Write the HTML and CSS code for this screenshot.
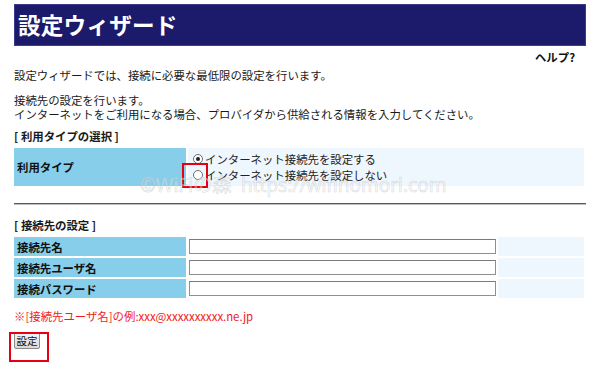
FILE: index.html
```html
<!DOCTYPE html>
<html lang="ja">
<head>
<meta charset="utf-8">
<link rel="stylesheet" href="styles.css">
</head>
<body>
<div class="page">
  <div class="header"><h1 class="title">設定ウィザード</h1></div>
  <div class="help">ヘルプ?</div>
  <p class="intro">設定ウィザードでは、接続に必要な最低限の設定を行います。</p>
  <p class="desc">接続先の設定を行います。<br>インターネットをご利用になる場合、プロバイダから供給される情報を入力してください。</p>

  <div class="section-title">[ 利用タイプの選択 ]</div>
  <div class="type-grid">
    <div class="label-cell">利用タイプ</div>
    <div class="value-cell radios">
      <label class="radio-row"><span class="radio checked"></span>インターネット接続先を設定する</label>
      <label class="radio-row"><span class="radio"></span>インターネット接続先を設定しない</label>
    </div>
  </div>

  <div class="rule"></div>

  <div class="section-title second">[ 接続先の設定 ]</div>
  <div class="conn-grid">
    <div class="label-cell">接続先名</div>
    <div class="input-cell"><span class="field"></span></div>
    <div class="value-cell"></div>
    <div class="label-cell">接続先ユーザ名</div>
    <div class="input-cell"><span class="field"></span></div>
    <div class="value-cell"></div>
    <div class="label-cell">接続パスワード</div>
    <div class="input-cell"><span class="field"></span></div>
    <div class="value-cell"></div>
  </div>

  <p class="note">※[接続先ユーザ名]の例:xxx@xxxxxxxxxx.ne.jp</p>
  <div class="btn-wrap"><button class="btn">設定</button></div>

  <div class="mark mark-radio"></div>
  <div class="mark mark-btn"></div>
  <div class="watermark">©WiFiの森 &nbsp;https://wifinomori.com</div>
</div>
</body>
</html>
```

FILE: styles.css
```css
html, body {
  margin: 0;
  padding: 0;
  background: #ffffff;
}
body {
  font-family: "Noto Sans CJK JP", "Noto Sans", sans-serif;
  font-size: 11.4px;
  color: #1a1a1a;
}
.page {
  position: relative;
  width: 600px;
  height: 365px;
  padding: 4px 14px 0;
  box-sizing: border-box;
  overflow: hidden;
}
.header {
  height: 42px;
  background: #1b1a6b;
  border: 1px solid #3e3d8c;
  box-sizing: border-box;
  width: 572px;
  display: flex;
  align-items: center;
}
.title {
  margin: 0 0 0 3px;
  color: #ffffff;
  font-size: 22.6px;
  font-weight: 700;
  line-height: 28px;
  letter-spacing: 0.2px;
}
.help {
  margin-top: 5px;
  width: 561px;
  text-align: right;
  font-weight: 700;
  line-height: 13px;
  color: #111;
}
.intro {
  margin: 5px 0 0;
  line-height: 13px;
}
.desc {
  margin: 11px 0 0;
  line-height: 14px;
}
.section-title {
  margin-top: 9px;
  font-weight: 700;
  line-height: 13px;
}
.section-title.second {
  margin-top: 14px;
}
.type-grid {
  margin-top: 5px;
  display: grid;
  grid-template-columns: 172px 396px;
  column-gap: 2px;
  height: 38px;
}
.label-cell {
  background: #87ceeb;
  font-weight: 700;
  display: flex;
  align-items: center;
  padding-left: 3px;
  color: #111;
}
.value-cell {
  background: #eef6fe;
}
.radios {
  display: flex;
  flex-direction: column;
  justify-content: center;
  padding-left: 5px;
}
.radio-row {
  display: flex;
  align-items: center;
  line-height: 16px;
  height: 16px;
  color: #222;
}
.radio {
  width: 8px;
  height: 8px;
  border: 1px solid #6e6e6e;
  border-radius: 50%;
  background: #fff;
  margin-right: 2px;
  position: relative;
  flex: none;
}
.radio.checked::after {
  content: "";
  position: absolute;
  left: 2px;
  top: 2px;
  width: 4px;
  height: 4px;
  border-radius: 50%;
  background: #222;
}
.rule {
  margin-top: 17px;
  width: 572px;
  border-top: 1px solid #5a5a5a;
  border-bottom: 1px solid #bdbdbd;
}
.conn-grid {
  margin-top: 5px;
  display: grid;
  grid-template-columns: 172px 308px 86px;
  grid-auto-rows: 19px;
  gap: 2px 2px;
}
.input-cell {
  background: #ffffff;
  display: flex;
  align-items: center;
  padding-left: 1px;
}
.field {
  display: block;
  width: 305px;
  height: 13px;
  border: 1px solid #8f8f8f;
  border-top-color: #7a7a7a;
  background: #fff;
}
.note {
  margin: 12px 0 0;
  color: #f01c1c;
  line-height: 13px;
}
.btn-wrap {
  margin-top: 9px;
}
.btn {
  font-family: "Noto Sans CJK JP", sans-serif;
  font-size: 10.5px;
  line-height: 13px;
  height: 17px;
  width: 26px;
  padding: 0;
  border: 1px solid #8a8a8a;
  border-radius: 2px;
  background: linear-gradient(#f4f4f4, #d9d9d9);
  color: #111;
}
.mark {
  position: absolute;
  border: 2px solid #e60012;
  box-sizing: border-box;
}
.mark-radio {
  left: 182px;
  top: 163px;
  width: 26px;
  height: 25px;
}
.mark-btn {
  left: 9px;
  top: 332px;
  width: 40px;
  height: 30px;
}
.watermark {
  position: absolute;
  left: 140px;
  top: 173px;
  font-family: "Noto Sans", "Noto Sans CJK JP", sans-serif;
  font-size: 19px;
  line-height: 24px;
  color: rgba(255, 255, 255, 0.35);
  -webkit-text-stroke: 0.6px rgba(180, 180, 180, 0.5);
  white-space: nowrap;
  pointer-events: none;
}
```
